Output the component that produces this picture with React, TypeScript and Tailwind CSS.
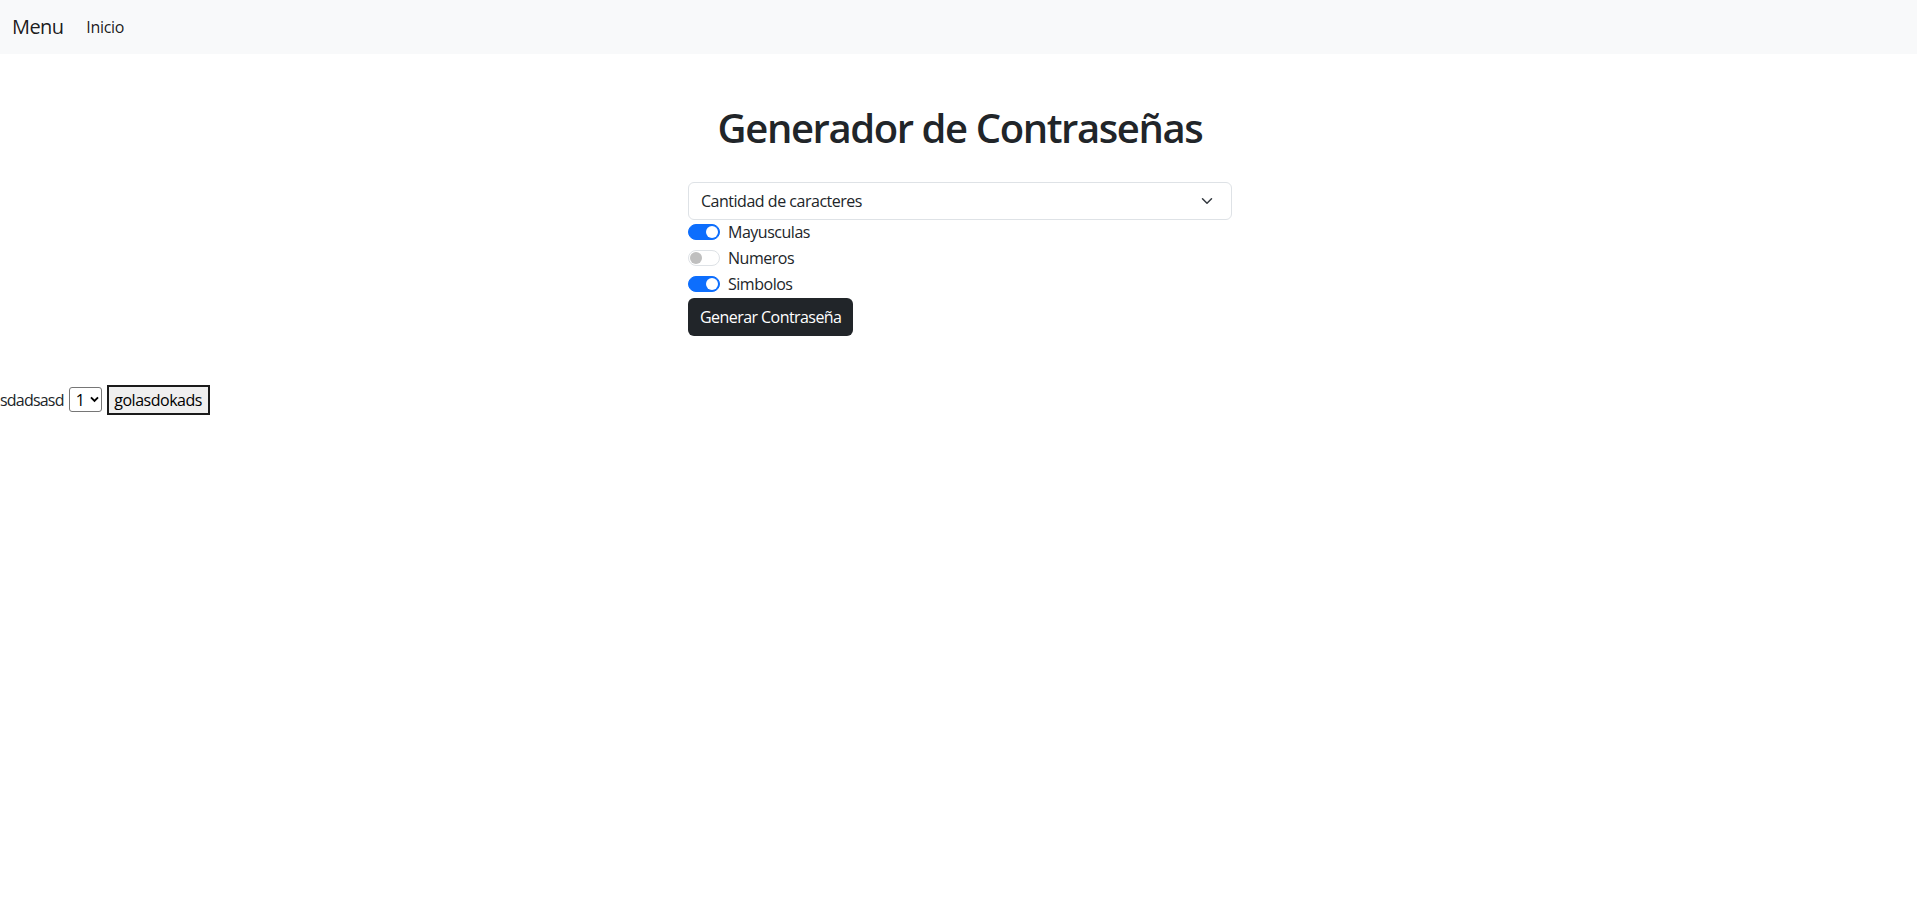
import React, { useState } from "react";

const font = { fontFamily: '"Segoe UI", "Open Sans", "Noto Sans", sans-serif' };

type SwitchProps = { label: string; checked: boolean; onChange: () => void };

function Switch({ label, checked, onChange }: SwitchProps) {
  return (
    <div className="flex h-6 mb-[2px] items-start cursor-pointer" onClick={onChange}>
      <span
        className={
          checked
            ? "mt-1 w-8 h-4 rounded-full bg-[#0d6efd] border border-[#0d6efd] flex items-center justify-end px-[1px]"
            : "mt-1 w-8 h-4 rounded-full bg-white border border-[#dee2e6] flex items-center justify-start px-[1px]"
        }
      >
        <span className={checked ? "w-3 h-3 rounded-full bg-white" : "w-3 h-3 rounded-full bg-[#bfbfbf]"} />
      </span>
      <span className="ml-2 text-[16px] leading-6 text-[#212529] tracking-[-0.03em]">{label}</span>
    </div>
  );
}

export default function App() {
  const [mayus, setMayus] = useState(true);
  const [nums, setNums] = useState(false);
  const [simb, setSimb] = useState(true);

  return (
    <div className="min-h-screen bg-white text-[#212529]" style={font}>
      {/* barra de navegacion */}
      <nav className="h-[54px] bg-[#f8f9fa] flex items-center pl-[12px]">
        <span className="text-[20px] text-black/90 tracking-[-0.03em]">Menu</span>
        <span className="ml-[23px] text-[16px] text-black/90 tracking-[-0.02em]">Inicio</span>
      </nav>

      <div className="flex justify-center pl-[3px] pt-[50px]">
        <div className="w-[544px]">
          <h1 className="text-center text-[40px] leading-[48px] font-semibold tracking-[-0.035em]">
            Generador de Contraseñas
          </h1>

          <div className="mt-[30px] h-[38px] border border-[#dee2e6] rounded-md flex items-center justify-between pl-3 pr-4">
            <span className="text-[16px] tracking-[-0.03em]">Cantidad de caracteres</span>
            <svg width="16" height="12" viewBox="0 0 16 16" fill="none" stroke="#343a40" strokeWidth="2" strokeLinecap="round" strokeLinejoin="round">
              <path d="m2 5 6 6 6-6" />
            </svg>
          </div>

          <Switch label="Mayusculas" checked={mayus} onChange={() => setMayus(!mayus)} />
          <Switch label="Numeros" checked={nums} onChange={() => setNums(!nums)} />
          <Switch label="Simbolos" checked={simb} onChange={() => setSimb(!simb)} />

          <button className="h-[38px] px-3 rounded-md bg-[#212529] text-white text-[16px] tracking-[-0.035em]">
            Generar Contraseña
          </button>
        </div>
      </div>

      {/* fila de prueba */}
      <div className="mt-[48px] flex items-center h-[31px]">
        <span className="text-[16px] tracking-[-0.05em]">sdadsasd</span>
        <span className="ml-[5px] w-[33px] h-[25px] border border-[#767676] rounded-[3px] flex items-center pl-[6px] gap-[5px]">
          <span className="text-[16px] text-black">1</span>
          <svg width="9" height="7" viewBox="0 0 10 8" fill="none" stroke="#000" strokeWidth="2.2">
            <path d="M1 1.5 5 5.5 9 1.5" />
          </svg>
        </span>
        <button className="ml-[5px] h-[30px] w-[103px] border-2 border-[#1b1b1b] bg-[#efefef] text-[16px] text-black tracking-[-0.03em]">
          golasdokads
        </button>
      </div>
    </div>
  );
}
